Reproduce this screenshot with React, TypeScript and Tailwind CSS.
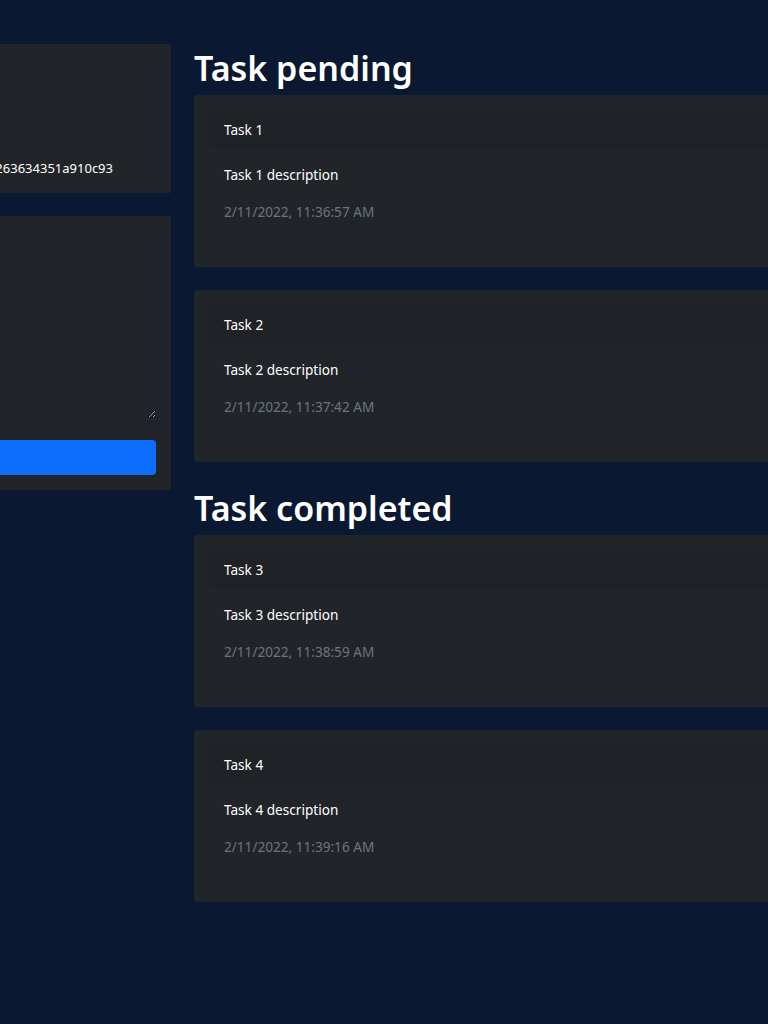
import React from "react";

type Task = { title: string; description: string; date: string };

const pending: Task[] = [
  { title: "Task 1", description: "Task 1 description", date: "2/11/2022, 11:36:57 AM" },
  { title: "Task 2", description: "Task 2 description", date: "2/11/2022, 11:37:42 AM" },
];

const completed: Task[] = [
  { title: "Task 3", description: "Task 3 description", date: "2/11/2022, 11:38:59 AM" },
  { title: "Task 4", description: "Task 4 description", date: "2/11/2022, 11:39:16 AM" },
];

function TaskCard({ task }: { task: Task }) {
  return (
    <div className="mb-[23px] rounded-[4px] bg-[#212529] p-[15px]">
      <div className="border-b border-[#1b1e22] bg-[#1f2226] px-[15px] pb-[7px] pt-[9px] text-[13.6px] leading-[21px] text-white">
        {task.title}
      </div>
      <div className="px-[15px] pb-[14px] pt-[16px] text-[13.6px] leading-[21px]">
        <p className="mb-[16px] text-white">{task.description}</p>
        <p className="mb-[16px] text-[#6c757d]">{task.date}</p>
      </div>
    </div>
  );
}

export default function App() {
  return (
    <div
      className="min-h-[1024px] w-full overflow-hidden bg-[#0a1931]"
      style={{ fontFamily: '"Noto Sans", "Open Sans", sans-serif' }}
    >
      <div className="ml-[-129px] flex gap-[23px] pt-[44px]">
        <div className="flex w-[300px] shrink-0 flex-col gap-[23px]">
          <div className="flex h-[149px] flex-col justify-end rounded-[2px] bg-[#212529] pb-[15px] pr-[58px] text-right text-[13px] leading-[20px] text-white">
            <div>6206263634351a910c93</div>
          </div>
          <div className="flex flex-col gap-[22px] rounded-[2px] bg-[#212529] p-[15px]">
            <textarea className="h-[187px] w-full resize-y border-none bg-transparent text-white outline-none" />
            <button className="h-[35px] w-full rounded-[4px] bg-[#0d6efd] text-white" />
          </div>
        </div>
        <div className="w-[700px] shrink-0 pt-[1px]">
          <h1 className="mb-[4px] text-[34px] font-semibold leading-[46px] text-white">Task pending</h1>
          {pending.map((t) => (
            <TaskCard key={t.title} task={t} />
          ))}
          <h1 className="mb-[4px] mt-[2px] text-[34px] font-semibold leading-[46px] text-white">Task completed</h1>
          {completed.map((t) => (
            <TaskCard key={t.title} task={t} />
          ))}
        </div>
      </div>
    </div>
  );
}
